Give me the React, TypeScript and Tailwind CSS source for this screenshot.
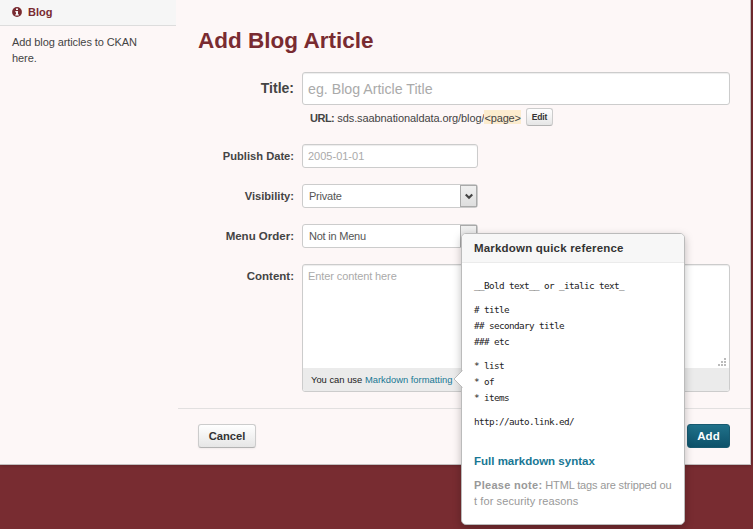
import type { ReactNode } from "react";

function Row({ label, className = "", labelClass = "text-[11px]", children }: { label: string; className?: string; labelClass?: string; children: ReactNode }) {
  return (
    <div className={`flex ${className}`}>
      <label className={`mr-2 w-24 shrink-0 pt-1 text-right leading-4 font-bold ${labelClass}`}>{label}</label>
      {children}
    </div>
  );
}

const field = "rounded-[3px] border border-[#ccc] bg-white shadow-[inset_0_1px_1px_rgba(0,0,0,0.075)]";

function Select({ value }: { value: string }) {
  return (
    <div className="flex h-6 w-44 justify-between rounded-[3px] border border-[#ccc] bg-white text-[#555]">
      <span className="pt-[3px] pl-1.5 tracking-[-0.22px]">{value}</span>
      <span className="flex w-[17px] items-center justify-center border border-[#aaa] bg-linear-to-b from-[#f0f0f0] to-[#dedede]">
        <svg width="8" height="7" viewBox="0 0 8 7" fill="none" stroke="#444" strokeWidth="2.2">
          <path d="M.7 1.500 4 4.800 7.300 1.500" />
        </svg>
      </span>
    </div>
  );
}

function Popover() {
  return (
    <aside className="absolute top-[233px] left-[461px] h-[292px] w-56 rounded-[5px] border border-[#bbb] bg-white shadow-[0_3px_9px_rgba(0,0,0,0.25)]">
      <svg className="absolute top-[136px] -left-[9px]" width="10" height="18" viewBox="0 0 10 18">
        <path d="M10 0 1 9l9 9Z" fill="#fff" />
        <path d="M9.5.5 1 9l8.500 8.500" fill="none" stroke="#bbb" />
      </svg>
      <h3 className="h-[29px] rounded-t-[4px] border-b border-[#ebebeb] bg-[#f7f7f7] pt-[6px] pl-3 text-[11.5px] leading-4 font-bold tracking-[0.19px] text-[#333]">
        Markdown quick reference
      </h3>
      <div className="px-3 pt-[15px]">
        <pre className="font-['DejaVu_Sans_Mono',monospace] text-[9.3px] leading-4 tracking-[-0.6px] text-[#222]">
          <p className="mb-2">__Bold text__ or _italic text_</p>
          <p className="mb-2">{"# title\n## secondary title\n### etc"}</p>
          <p className="mb-2">{"* list\n* of\n* items"}</p>
          <p>http://auto.link.ed/</p>
        </pre>
        <p className="mt-[23px] text-[11.5px] leading-4 font-bold text-[#187794]">Full markdown syntax</p>
        <p className="mt-2 whitespace-nowrap text-[#999]">
          <b className="tracking-[0.3px]">Please note:</b><span className="tracking-[-0.15px]"> HTML tags are stripped ou</span>
          <br /><span className="tracking-[0.1px]">t for security reasons</span>
        </p>
      </div>
    </aside>
  );
}

export default function App() {
  return (
    <div className="relative h-[529px] w-[753px] overflow-hidden bg-[#782c31] font-['Liberation_Sans',Arial,sans-serif] text-[11px] leading-4 text-[#444]">
      <div className="flex h-[465px] w-[751px] border-r border-b border-[#c3bfbf] bg-[#fdf7f7] shadow-[0_0_4px_rgba(0,0,0,0.3)]">
        <aside className="w-44">
          <h2 className="flex h-[26px] items-center border-b border-[#ddd] bg-[#f6f6f6] pb-px pl-3 font-bold text-[#792b31]">
            <svg className="mr-1.5 block" width="10" height="10" viewBox="0 0 10 10">
              <circle cx="5" cy="5" r="4.900" fill="#792b31" />
              <path d="M4 1.400h2v1.500H4zM3.300 4H6v3.200h.8v1.300H3.300V7.200H4V5.200h-.7z" fill="#f6f6f6" />
            </svg>
            Blog
          </h2>
          <p className="px-3 pt-2 tracking-[-0.09px]">Add blog articles to CKAN<br />here.</p>
        </aside>
        <main className="ml-0.5 flex-1">
          <h1 className="ml-5 pt-[27px] text-[22.500px] leading-7 font-bold text-[#792b31]">Add Blog Article</h1>
          <form className="pl-5">
            <div className="mt-[17px] flex">
              <label className="mr-2 w-24 shrink-0 pt-[7px] text-right text-[14px] leading-[18px] font-bold">Title:</label>
              <div className={`h-[33px] w-[428px] ${field} pt-[7px] pl-[5px] text-[14.2px] leading-[18px] text-[#aaa]`}>
                eg. Blog Article Title
              </div>
            </div>
            <div className="mt-[3px] ml-28 flex h-[18px]">
              <span className="mt-[2px] flex w-[211px] whitespace-nowrap tracking-[-0.09px]"><b className="mr-[3px] tracking-[-0.5px]">URL:</b>sds.saabnationaldata.org/blog/<span className="h-3.5 bg-[#fcecce] tracking-[-0.15px]">&lt;page&gt;</span></span>
              <button type="button" className="ml-[5px] h-[18px] w-[27px] rounded-[3px] border border-[#ccc] border-b-[#b3b3b3] bg-linear-to-b from-white to-[#e6e6e6] text-[8.500px] leading-[15px] font-bold tracking-[-0.15px] text-[#333]">Edit</button>
            </div>
            <Row label="Publish Date:" labelClass="text-[11.15px]" className="mt-[18px]">
              <div className={`h-6 w-44 ${field} pt-[3px] pl-[5px] text-[#aaa]`}>2005-01-01</div>
            </Row>
            <Row label="Visibility:" labelClass="text-[11.15px]" className="mt-4"><Select value="Private" /></Row>
            <Row label="Menu Order:" labelClass="text-[11.5px]" className="mt-4"><Select value="Not in Menu" /></Row>
            <Row label="Content:" labelClass="text-[11.5px]" className="mt-4">
              <div className={`flex h-32 w-[428px] flex-col overflow-hidden ${field}`}>
                <div className="flex h-[103px] justify-between">
                  <span className="pt-[3px] pl-[5px] tracking-[-0.1px] text-[#aaa]">Enter content here</span>
                  <svg className="mt-auto mr-[3px] mb-[2px]" width="8" height="8" viewBox="0 0 8 8" fill="#bbb">
                    <path d="M6 0h2v2H6zM3 3h2v2H3zM6 3h2v2H6zM0 6h2v2H0zM3 6h2v2H3zM6 6h2v2H6z" />
                  </svg>
                </div>
                <div className="flex-1 bg-[#ebebeb] pt-[4px] pl-2 text-[9.4px] leading-4 text-[#222]">
                  You can use <a className="text-[#187794]">Markdown formatting</a>
                </div>
              </div>
            </Row>
          </form>
          <footer className="mt-4 flex justify-between border-t border-[#e2e0e0] pt-[15px] pr-5 pl-5">
            <button type="button" className="h-6 w-[58px] rounded-[3px] border border-[#ccc] border-b-[#b3b3b3] bg-linear-to-b from-white to-[#e6e6e6] text-[11.2px] font-bold text-[#333] shadow-[0_1px_2px_rgba(0,0,0,0.05)]">Cancel</button>
            <button type="button" className="h-6 w-[43px] rounded-[3px] border border-[#185a70] bg-linear-to-b from-[#20718a] to-[#0d526a] text-[11.500px] font-bold text-white">Add</button>
          </footer>
        </main>
      </div>
      <Popover />
    </div>
  );
}
